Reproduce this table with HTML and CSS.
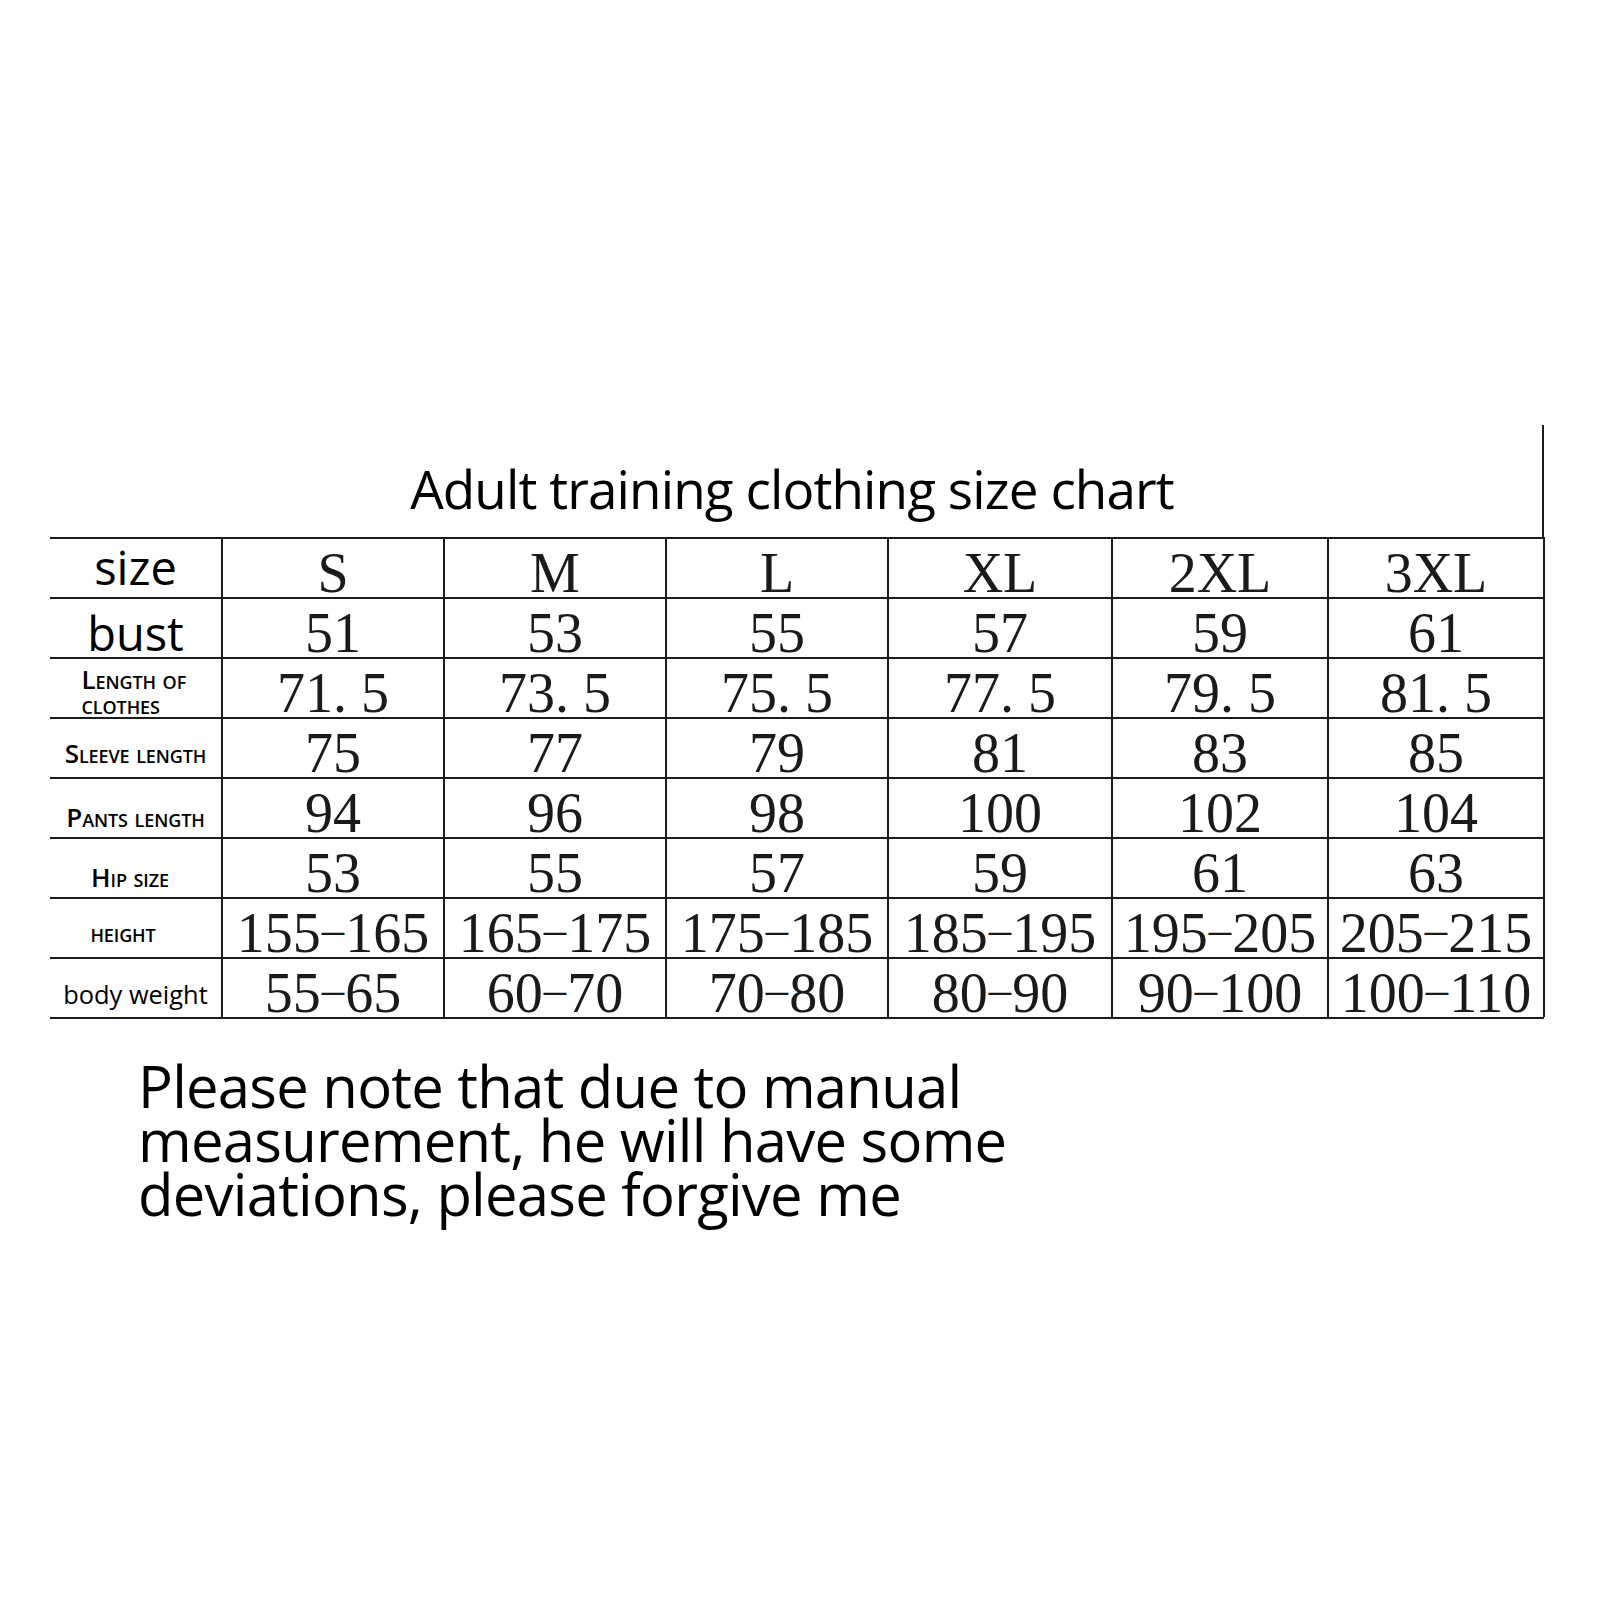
FILE: index.html
```html
<!DOCTYPE html>
<html lang="en">
<head>
<meta charset="utf-8">
<title>Adult training clothing size chart</title>
<link rel="stylesheet" href="styles.css">
</head>
<body>
<div class="sheet">
  <div class="title-row"><h1 class="title">Adult training clothing size chart</h1></div>
  <div class="chart">
    <div class="cell lab lab-size"><span>size</span></div>
    <div class="cell val"><span>S</span></div>
    <div class="cell val"><span>M</span></div>
    <div class="cell val"><span>L</span></div>
    <div class="cell val"><span>XL</span></div>
    <div class="cell val"><span>2XL</span></div>
    <div class="cell val"><span>3XL</span></div>

    <div class="cell lab lab-bust"><span>bust</span></div>
    <div class="cell val"><span>51</span></div>
    <div class="cell val"><span>53</span></div>
    <div class="cell val"><span>55</span></div>
    <div class="cell val"><span>57</span></div>
    <div class="cell val"><span>59</span></div>
    <div class="cell val"><span>61</span></div>

    <div class="cell lab sc lab-length"><span>Length of clothes</span></div>
    <div class="cell val"><span>71. 5</span></div>
    <div class="cell val"><span>73. 5</span></div>
    <div class="cell val"><span>75. 5</span></div>
    <div class="cell val"><span>77. 5</span></div>
    <div class="cell val"><span>79. 5</span></div>
    <div class="cell val"><span>81. 5</span></div>

    <div class="cell lab sc lab-sleeve"><span>Sleeve length</span></div>
    <div class="cell val"><span>75</span></div>
    <div class="cell val"><span>77</span></div>
    <div class="cell val"><span>79</span></div>
    <div class="cell val"><span>81</span></div>
    <div class="cell val"><span>83</span></div>
    <div class="cell val"><span>85</span></div>

    <div class="cell lab sc lab-pants"><span>Pants length</span></div>
    <div class="cell val"><span>94</span></div>
    <div class="cell val"><span>96</span></div>
    <div class="cell val"><span>98</span></div>
    <div class="cell val"><span>100</span></div>
    <div class="cell val"><span>102</span></div>
    <div class="cell val"><span>104</span></div>

    <div class="cell lab sc lab-hip"><span>Hip size</span></div>
    <div class="cell val"><span>53</span></div>
    <div class="cell val"><span>55</span></div>
    <div class="cell val"><span>57</span></div>
    <div class="cell val"><span>59</span></div>
    <div class="cell val"><span>61</span></div>
    <div class="cell val"><span>63</span></div>

    <div class="cell lab sc lab-height"><span>height</span></div>
    <div class="cell val"><span>155<span class="dash">–</span>165</span></div>
    <div class="cell val"><span>165<span class="dash">–</span>175</span></div>
    <div class="cell val"><span>175<span class="dash">–</span>185</span></div>
    <div class="cell val"><span>185<span class="dash">–</span>195</span></div>
    <div class="cell val"><span>195<span class="dash">–</span>205</span></div>
    <div class="cell val"><span>205<span class="dash">–</span>215</span></div>

    <div class="cell lab lab-weight"><span>body weight</span></div>
    <div class="cell val"><span>55<span class="dash">–</span>65</span></div>
    <div class="cell val"><span>60<span class="dash">–</span>70</span></div>
    <div class="cell val"><span>70<span class="dash">–</span>80</span></div>
    <div class="cell val"><span>80<span class="dash">–</span>90</span></div>
    <div class="cell val"><span>90<span class="dash">–</span>100</span></div>
    <div class="cell val"><span>100<span class="dash">–</span>110</span></div>
  </div>
  <p class="note">Please note that due to manual<br>measurement, he will have some<br>deviations, please forgive me</p>
</div>
</body>
</html>
```
FILE: styles.css
```css
html, body {
  margin: 0;
  padding: 0;
  background: #ffffff;
}

body {
  font-family: "Open Sans", "Noto Sans", sans-serif;
  color: #000000;
}

.sheet {
  margin-left: 50px;
  width: 1494px;
  padding-top: 425px;
  padding-bottom: 200px;
}

.title-row {
  box-sizing: border-box;
  height: 112.3px;
  border-right: 2px solid #1c1c1c;
  display: flex;
  align-items: flex-end;
  justify-content: center;
  padding-right: 8px;
}

.title {
  margin: 0;
  font-weight: 400;
  font-size: 53px;
  line-height: 53px;
  letter-spacing: -0.9px;
  padding-bottom: 22.4px;
  white-space: nowrap;
}

.chart {
  display: grid;
  grid-template-columns: 173px 222px 222px 222px 224px 216px 216px;
  grid-auto-rows: 60px;
  border-bottom: 2px solid #1c1c1c;
}

.cell {
  box-sizing: border-box;
  border-top: 2px solid #1c1c1c;
  border-right: 2px solid #1c1c1c;
  display: flex;
  align-items: flex-end;
  justify-content: center;
  white-space: nowrap;
}

.val span {
  display: block;
  font-family: "Liberation Serif", "Times New Roman", serif;
  font-size: 56px;
  line-height: 47.6px;
  color: #1a1a1a;
}

.val .dash {
  display: inline;
  font-size: 0.8em;
  line-height: 1;
  margin: 0 1px;
  vertical-align: 8px;
}

.lab span {
  display: block;
  line-height: 1;
}

.lab-size span,
.lab-bust span {
  font-size: 47px;
}

.lab-size span { padding-bottom: 6.3px; }
.lab-bust span { padding-bottom: 0.3px; }

.sc span {
  font-size: 26px;
  font-weight: 600;
  font-variant: small-caps;
  letter-spacing: -0.1px;
}

.lab-length span {
  white-space: normal;
  width: 112px;
  line-height: 25px;
  text-align: left;
  padding-bottom: 0;
  margin-left: 4px;
}

.lab-sleeve span { padding-bottom: 11.7px; }
.lab-pants span { padding-bottom: 7.1px; }
.lab-hip { padding-right: 11px; }
.lab-hip span { padding-bottom: 7.1px; }
.lab-height { padding-right: 25px; }
.lab-height span { padding-bottom: 12.7px; }

.lab-weight span {
  font-size: 25.4px;
  padding-bottom: 10.2px;
}

.note {
  margin: 39.5px 0 0 88px;
  font-size: 58px;
  line-height: 54px;
  letter-spacing: -0.75px;
  white-space: nowrap;
}
```
